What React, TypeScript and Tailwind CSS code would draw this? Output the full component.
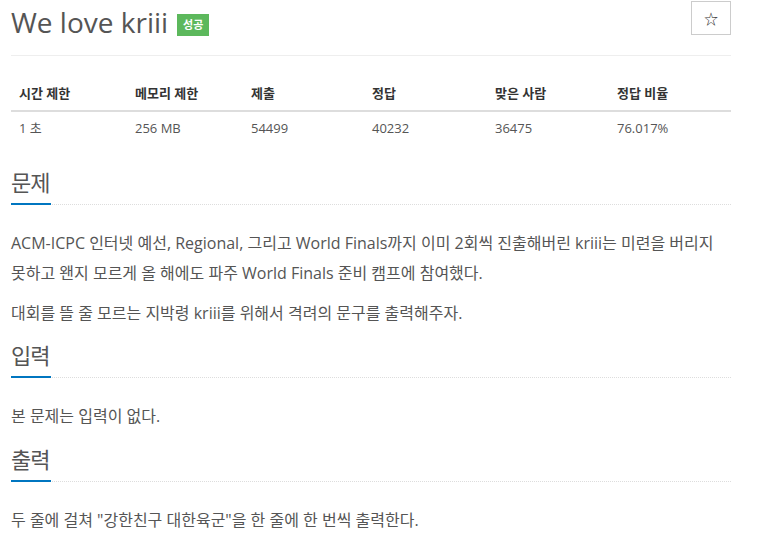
import React from "react";

const font = { fontFamily: '"Open Sans", "Noto Sans CJK KR", sans-serif' };

function Heading({ children, mt }: { children: React.ReactNode; mt: string }) {
  return (
    <div className={`border-b border-dotted border-[#ddd] ${mt}`}>
      <div className="inline-block w-[40px] border-b-2 border-[#0076c0] -mb-[1px] pb-[6px] text-[22px] leading-[30px] text-[#555] whitespace-nowrap tracking-[-1px]">
        {children}
      </div>
    </div>
  );
}

export default function App() {
  const heads = ["시간 제한", "메모리 제한", "제출", "정답", "맞은 사람", "정답 비율"];
  const vals = ["1 초", "256 MB", "54499", "40232", "36475", "76.017%"];
  const widths = ["w-[116px]", "w-[116px]", "w-[121px]", "w-[123px]", "w-[122px]", "w-[122px]"];
  return (
    <div className="bg-white min-h-[542px] w-[773px]" style={font}>
      <div className="ml-[11px] w-[720px]">
        <div className="flex items-start justify-between border-b border-[#eee] h-[56px]">
          <div className="flex items-center pt-[4px]">
            <span className="text-[28px] leading-[36px] text-[#555]">We love kriii</span>
            <span className="ml-[9px] mt-[5px] bg-[#5cb85c] text-white text-[11px] font-bold leading-[22px] px-[6px]">성공</span>
          </div>
          <button className="mt-[1px] w-[40px] h-[34px] border border-[#ccc] flex items-center justify-center text-[14px] text-[#333]">☆</button>
        </div>
        <div className="mt-[20px] text-[13px] text-[#333]">
          <div className="flex border-b-2 border-[#ddd] font-bold">
            {heads.map((h, i) => (
              <div key={i} className={`${widths[i]} px-[8px] py-[7px] leading-[20px]`}>{h}</div>
            ))}
          </div>
          <div className="flex text-[#555]">
            {vals.map((v, i) => (
              <div key={i} className={`${widths[i]} px-[8px] pt-[6px] pb-[8px] leading-[20px]`}>{v}</div>
            ))}
          </div>
        </div>
        <Heading mt="mt-[21px]">문제</Heading>
        <div className="text-[16px] leading-[30px] text-[#555] mt-[23px]">
          <p>ACM-ICPC 인터넷 예선, Regional, 그리고 World Finals까지 이미 2회씩 진출해버린 kriii는 미련을 버리지 못하고 왠지 모르게 올 해에도 파주 World Finals 준비 캠프에 참여했다.</p>
          <p className="mt-[10px]">대회를 뜰 줄 모르는 지박령 kriii를 위해서 격려의 문구를 출력해주자.</p>
        </div>
        <Heading mt="mt-[12px]">입력</Heading>
        <div className="text-[16px] leading-[30px] text-[#555] mt-[23px]">
          <p>본 문제는 입력이 없다.</p>
        </div>
        <Heading mt="mt-[13px]">출력</Heading>
        <div className="text-[16px] leading-[30px] text-[#555] mt-[23px]">
          <p>두 줄에 걸쳐 "강한친구 대한육군"을 한 줄에 한 번씩 출력한다.</p>
        </div>
      </div>
    </div>
  );
}
